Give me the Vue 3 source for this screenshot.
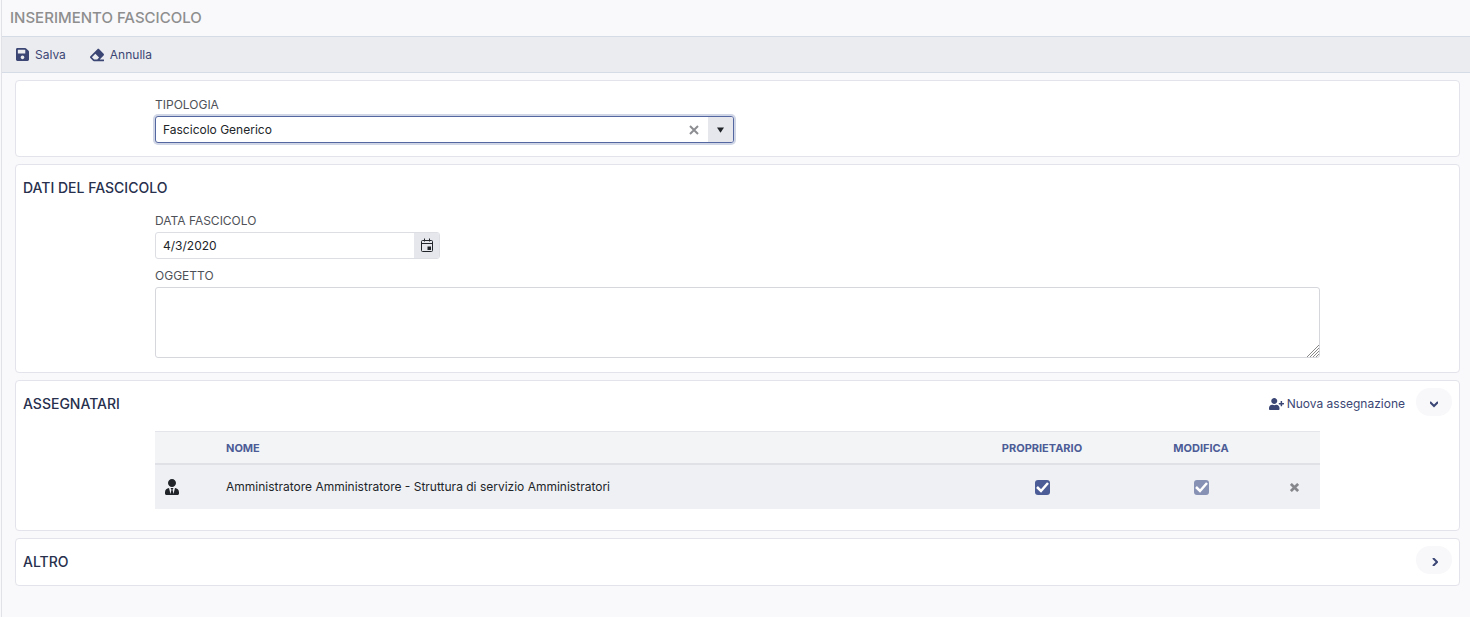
<script setup>
import { ref } from 'vue'

const tipologia = ref('Fascicolo Generico')
const dataFascicolo = ref('4/3/2020')
const oggetto = ref('')
const assegnatari = ref([
  {
    nome: 'Amministratore Amministratore - Struttura di servizio Amministratori',
    proprietario: true,
    modifica: true,
  },
])
</script>

<template>
  <main class="page">
    <header class="page-header">
      <h1>INSERIMENTO FASCICOLO</h1>
    </header>

    <nav class="toolbar">
      <button type="button" class="tool">
        <svg class="icon-save" viewBox="0 32 448 448" aria-hidden="true">
          <path d="M433.941 129.941l-83.882-83.882A48 48 0 0 0 316.118 32H48C21.49 32 0 53.49 0 80v352c0 26.51 21.49 48 48 48h352c26.51 0 48-21.49 48-48V163.882a48 48 0 0 0-14.059-33.941zM224 416c-35.346 0-64-28.654-64-64 0-35.346 28.654-64 64-64s64 28.654 64 64c0 35.346-28.654 64-64 64zm96-304.52V212c0 6.627-5.373 12-12 12H76c-6.627 0-12-5.373-12-12V108c0-6.627 5.373-12 12-12h228.52c3.183 0 6.235 1.264 8.485 3.515l3.48 3.48A11.996 11.996 0 0 1 320 111.48z" />
        </svg>
        Salva
      </button>
      <button type="button" class="tool">
        <svg class="icon-eraser" viewBox="0 0 512 512" aria-hidden="true">
          <path d="M497.941 273.941c18.745-18.745 18.745-49.137 0-67.882l-160-160c-18.745-18.745-49.136-18.746-67.883 0l-256 256c-18.745 18.745-18.745 49.137 0 67.882l96 96A48.004 48.004 0 0 0 144 480h356c6.627 0 12-5.373 12-12v-40c0-6.627-5.373-12-12-12H355.883l142.058-142.059zm-302.627-62.627l137.373 137.373L265.373 416H150.628l-80-80 124.686-124.686z" />
        </svg>
        Annulla
      </button>
    </nav>

    <div class="cards">
      <section class="card card-type">
        <div class="fields">
          <div class="field span-2">
            <label for="tipologia">TIPOLOGIA</label>
            <div class="control combo">
              <select id="tipologia" v-model="tipologia">
                <option>Fascicolo Generico</option>
              </select>
              <button type="button" class="clear" aria-label="Cancella" @click="tipologia = ''">
                <svg viewBox="0 0 10 10" aria-hidden="true"><path d="M1 1l8 8M9 1l-8 8" /></svg>
              </button>
              <span class="addon arrow" aria-hidden="true">
                <svg viewBox="0 0 8 6"><path d="M0 0h8L4 6z" /></svg>
              </span>
            </div>
          </div>
        </div>
      </section>

      <section class="card card-data">
        <h2>DATI DEL FASCICOLO</h2>
        <div class="fields">
          <div class="field">
            <label for="data">DATA FASCICOLO</label>
            <div class="control">
              <input id="data" v-model="dataFascicolo" type="text" />
              <button type="button" class="addon" aria-label="Apri calendario">
                <svg class="icon-calendar" viewBox="0 0 14 15" aria-hidden="true">
                  <rect x="1.5" y="2.5" width="11" height="11" rx="1" class="line" />
                  <path d="M1.5 5.5h11M4.500 0.500v3M9.500 0.500v3" class="line" />
                  <path d="M7.5 8.500h3.500v3.500h-3.500z" />
                </svg>
              </button>
            </div>
          </div>
          <div class="field span-4">
            <label for="oggetto">OGGETTO</label>
            <div class="area">
              <textarea id="oggetto" v-model="oggetto"></textarea>
              <svg class="grip" viewBox="0 0 12 12" aria-hidden="true">
                <path d="M0 12L12 0M3 12l9-9M6 12l6-6M9 12l3-3" />
              </svg>
            </div>
          </div>
        </div>
      </section>

      <section class="card card-assign">
        <div class="card-head">
          <h2>ASSEGNATARI</h2>
          <div class="actions">
            <button type="button" class="add">
              <svg viewBox="0 0 640 512" aria-hidden="true">
                <path d="M624 208h-64v-64c0-8.800-7.200-16-16-16h-32c-8.800 0-16 7.200-16 16v64h-64c-8.800 0-16 7.200-16 16v32c0 8.800 7.200 16 16 16h64v64c0 8.800 7.200 16 16 16h32c8.800 0 16-7.200 16-16v-64h64c8.800 0 16-7.200 16-16v-32c0-8.800-7.200-16-16-16zm-400 48c70.700 0 128-57.300 128-128S294.700 0 224 0 96 57.300 96 128s57.300 128 128 128zm89.600 32h-16.700c-22.200 10.200-46.900 16-72.900 16s-50.600-5.800-72.900-16h-16.700C60.200 288 0 348.200 0 422.400V464c0 26.500 21.500 48 48 48h352c26.500 0 48-21.500 48-48v-41.600c0-74.200-60.200-134.400-134.400-134.400z" />
              </svg>
              Nuova assegnazione
            </button>
            <button type="button" class="toggle" aria-label="Comprimi assegnatari" aria-expanded="true">
              <svg viewBox="0 0 8 8" aria-hidden="true"><path d="M0 2l4 4 4-4" /></svg>
            </button>
          </div>
        </div>
        <table>
          <colgroup>
            <col class="col-icon" />
            <col />
            <col class="col-owner" />
            <col class="col-edit" />
            <col class="col-remove" />
          </colgroup>
          <thead>
            <tr>
              <th></th>
              <th class="name">NOME</th>
              <th>PROPRIETARIO</th>
              <th>MODIFICA</th>
              <th></th>
            </tr>
          </thead>
          <tbody>
            <tr v-for="a in assegnatari" :key="a.nome">
              <td class="person">
                <svg viewBox="0 0 448 512" aria-hidden="true">
                  <path d="M224 256c70.700 0 128-57.300 128-128S294.700 0 224 0 96 57.300 96 128s57.300 128 128 128zm95.800 32.600L272 480l-32-136 32-56h-96l32 56-32 136-47.800-191.400C56.900 292 0 350.300 0 422.400V464c0 26.500 21.500 48 48 48h352c26.500 0 48-21.500 48-48v-41.600c0-72.100-56.900-130.400-128.200-133.800z" />
                </svg>
              </td>
              <td class="name">{{ a.nome }}</td>
              <td>
                <label class="check">
                  <input v-model="a.proprietario" type="checkbox" aria-label="Proprietario" />
                  <svg viewBox="0 0 15 15" aria-hidden="true"><path d="M2 7l4 4 7-8" /></svg>
                </label>
              </td>
              <td>
                <label class="check">
                  <input v-model="a.modifica" type="checkbox" aria-label="Modifica" disabled />
                  <svg viewBox="0 0 15 15" aria-hidden="true"><path d="M2 7l4 4 7-8" /></svg>
                </label>
              </td>
              <td>
                <button type="button" class="remove" aria-label="Rimuovi">
                  <svg viewBox="0 0 10 10" aria-hidden="true"><path d="M1 1l8 8M9 1l-8 8" /></svg>
                </button>
              </td>
            </tr>
          </tbody>
        </table>
      </section>

      <section class="card card-other">
        <div class="card-head">
          <h2>ALTRO</h2>
          <button type="button" class="toggle" aria-label="Espandi altro" aria-expanded="false">
            <svg viewBox="0 0 8 8" aria-hidden="true"><path d="M3 0l4 4-4 4" /></svg>
          </button>
        </div>
      </section>
    </div>
  </main>
</template>

<style>
body {
  background: #f9f9fb;
}
</style>

<style scoped>
.page,
.page * {
  box-sizing: border-box;
}
.page {
  min-height: 100vh;
  margin-left: 1px;
  border-left: 1px solid #e0e2e8;
  background: #f9f9fb;
  color: #212529;
  font: 12px/18px Inter, "Liberation Sans", sans-serif;
}
button,
input,
select,
textarea {
  margin: 0;
  padding: 0;
  border: 0;
  background: none;
  color: inherit;
  font: inherit;
  outline: none;
}
button {
  display: inline-flex;
  align-items: center;
  justify-content: center;
  cursor: pointer;
}
svg {
  display: block;
  flex: none;
  fill: currentColor;
}
.page-header {
  height: 37px;
  padding: 0 8px;
  border-bottom: 1px solid #d5dce5;
}
h1 {
  margin: 0;
  color: #8e8e8e;
  font-size: 15px;
  font-weight: 500;
  line-height: 36px;
}
.toolbar {
  display: flex;
  gap: 24px;
  height: 36px;
  padding: 0 14px;
  border-bottom: 1px solid #d5dce5;
  background: #ebecef;
}
.tool {
  gap: 6px;
  color: #3b4674;
}
.icon-save {
  width: 13px;
  height: 13px;
}
.icon-eraser {
  width: 14px;
  height: 14px;
}
.cards {
  display: flex;
  flex-direction: column;
  gap: 7px;
  padding: 7px 10px 7px 13px;
}
.card {
  border: 1px solid #e3e4eb;
  border-radius: 4px;
  background: #fff;
}
.card-type {
  padding: 15px 0 13px;
}
.card-data {
  padding: 14px 0;
}
.card-assign {
  padding: 7px 0 21px;
}
.card-other {
  padding: 7px 0 11px;
}
h2 {
  margin: 0;
  padding-left: 7px;
  color: #27304d;
  font-size: 14px;
  font-weight: 500;
  line-height: 18px;
}
.fields {
  display: grid;
  grid-template-columns: repeat(4, 1fr);
  gap: 8px;
  margin: 0 139px;
}
.card-data .fields {
  margin-top: 15px;
}
.span-2 {
  grid-column: span 2;
}
.span-4 {
  grid-column: span 4;
}
.field label {
  display: block;
  margin-bottom: 2px;
  color: #4e5158;
}
.control {
  display: flex;
  height: 27px;
  overflow: hidden;
  border: 1px solid #dcdee4;
  border-radius: 3px;
  background: #fff;
}
.control input,
.control select {
  flex: 1;
  min-width: 0;
  padding-left: 7px;
  appearance: none;
}
.combo {
  border-color: #5567a0;
  box-shadow: 0 0 0 2px #d0d6e5;
}
.clear {
  width: 27px;
  color: #8b8d91;
}
.clear svg {
  width: 10px;
  height: 10px;
}
.clear path,
.remove path {
  fill: none;
  stroke: currentColor;
  stroke-width: 2;
}
.addon {
  display: flex;
  align-items: center;
  justify-content: center;
  width: 25px;
  background: #e5e7ec;
}
.arrow svg {
  width: 7px;
  height: 6px;
}
.icon-calendar {
  width: 14px;
  height: 15px;
}
.line {
  fill: none;
  stroke: currentColor;
  stroke-width: 1;
}
.area {
  position: relative;
}
textarea {
  display: block;
  width: 100%;
  height: 71px;
  padding: 4px 8px;
  border: 1px solid #d5d7dd;
  border-radius: 3px;
  resize: vertical;
}
textarea::-webkit-resizer {
  background: transparent;
}
.grip {
  position: absolute;
  right: 1px;
  bottom: 1px;
  width: 12px;
  height: 12px;
  fill: none;
  stroke: #888;
  pointer-events: none;
}
.card-head {
  display: flex;
  align-items: center;
  justify-content: space-between;
  padding-right: 7px;
}
.card-head h2 {
  padding-top: 4px;
}
.actions {
  display: flex;
  gap: 11px;
}
.add {
  gap: 3px;
  padding-top: 4px;
  color: #3b4674;
}
.add svg {
  width: 15px;
  height: 12px;
}
.toggle {
  width: 36px;
  height: 28px;
  padding-top: 4px;
  border-radius: 14px;
  background: #f8f8fb;
  color: #3b4674;
}
.toggle svg {
  width: 8px;
  height: 8px;
}
.toggle path {
  fill: none;
  stroke: currentColor;
  stroke-width: 2;
}
table {
  width: calc(100% - 278px);
  margin: 15px 139px 0;
  border-collapse: separate;
  border-spacing: 0;
  table-layout: fixed;
}
.col-icon {
  width: 63px;
}
.col-owner {
  width: 184px;
}
.col-edit {
  width: 134px;
}
.col-remove {
  width: 52px;
}
th {
  height: 34px;
  padding: 0;
  border-top: 1px solid #e3e5ea;
  border-bottom: 2px solid #dfe1e7;
  background: #f3f4f6;
  color: #4c5c96;
  font-size: 11px;
  font-weight: 700;
}
td {
  height: 44px;
  padding: 0;
  background: #eff0f4;
  text-align: center;
  vertical-align: middle;
}
.name {
  padding-left: 8px;
  text-align: left;
}
.person svg {
  width: 14px;
  height: 16px;
  margin-left: 10px;
}
.check {
  position: relative;
  display: block;
  width: 15px;
  height: 15px;
  margin: 0 auto;
}
.check input {
  display: block;
  width: 15px;
  height: 15px;
  border-radius: 3px;
  background: #4c5c96;
  appearance: none;
}
.check input:disabled {
  background: #8791b3;
}
.check svg {
  position: absolute;
  inset: 0;
  fill: none;
  stroke: #fff;
  stroke-width: 2.5;
  pointer-events: none;
}
.check input:not(:checked) + svg {
  display: none;
}
.remove {
  display: flex;
  margin: 0 auto;
  color: #85878c;
}
.remove svg {
  width: 9px;
  height: 9px;
}
.remove path {
  stroke-width: 3;
}
</style>
